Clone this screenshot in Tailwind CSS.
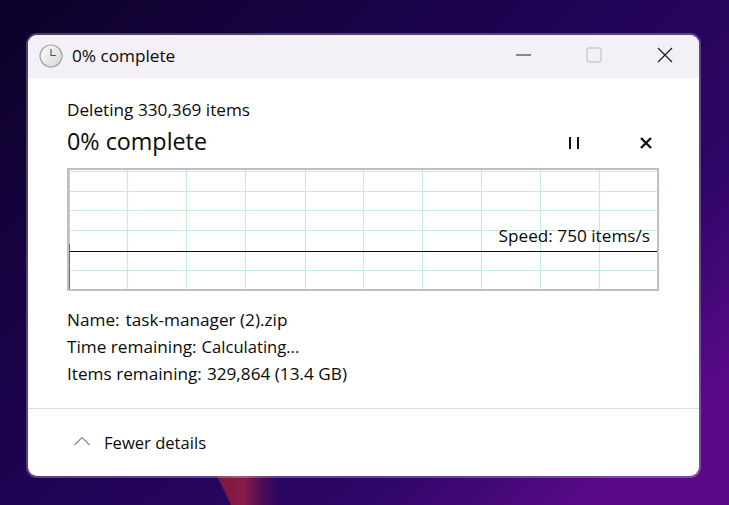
<!DOCTYPE html>
<html lang="en">
<head>
    <meta charset="UTF-8">
    <meta name="viewport" content="width=device-width, initial-scale=1.0">
    <title>0% complete</title>
    <script src="https://cdn.jsdelivr.net/npm/@tailwindcss/browser@4"></script>
</head>
<body class="relative w-[729px] h-[505px] overflow-hidden bg-[#16043f] font-['Open_Sans',sans-serif] text-[#0a0a0a]">

    <!-- wallpaper -->
    <svg class="absolute inset-0" width="729" height="505" viewBox="0 0 729 505">
        <defs>
            <linearGradient id="wall" x1="0" y1="0" x2="1" y2="0.75">
                <stop offset="0" stop-color="#0c0228"/>
                <stop offset="0.45" stop-color="#1c0350"/>
                <stop offset="0.8" stop-color="#2f0668"/>
                <stop offset="1" stop-color="#5a0a88"/>
            </linearGradient>
            <linearGradient id="wisp" x1="0" y1="0" x2="1" y2="0">
                <stop offset="0" stop-color="#7a1840"/>
                <stop offset="0.4" stop-color="#8a1c46"/>
                <stop offset="1" stop-color="#3a0a58" stop-opacity="0"/>
            </linearGradient>
        </defs>
        <rect width="729" height="505" fill="url(#wall)"/>
        <path d="M217 476 L275 476 L285 505 L231 505Z" fill="url(#wisp)"/>
    </svg>

    <div class="relative pt-[35px] pl-[28px]">
        <div class="w-[671px] h-[441px] flex flex-col rounded-[9px] bg-white outline-2 outline-white/25">

            <!-- title bar -->
            <div class="h-[43px] shrink-0 flex items-center rounded-t-[9px] bg-[#f3f0f7] pl-[11px]">
                <svg class="-mt-[2px]" width="24" height="24" viewBox="0 0 24 24">
                    <defs>
                        <linearGradient id="clock" x1="0" y1="0" x2="1" y2="1">
                            <stop offset="0" stop-color="#ffffff"/>
                            <stop offset="1" stop-color="#d4d4d4"/>
                        </linearGradient>
                    </defs>
                    <circle cx="12" cy="12" r="11" fill="url(#clock)" stroke="#a4a4a4" stroke-width="1.2"/>
                    <path d="M12 5V11.5H17" fill="none" stroke="#5a5a5a" stroke-width="1.2"/>
                </svg>
                <span class="ml-[9px] -mt-[2px] text-[17.2px]">0% complete</span>
                <div class="ml-auto flex items-center -mt-[3px]">
                    <svg class="mr-[54px]" width="16" height="16" viewBox="0 0 16 16"><path d="M0 8H15" stroke="#1a1a1a" stroke-width="1"/></svg>
                    <svg class="mr-[55px]" width="16" height="16" viewBox="0 0 16 16"><rect x="1" y="1" width="14" height="14" rx="2" fill="none" stroke="#cccccc" stroke-width="1.4"/></svg>
                    <svg class="mr-[26px]" width="16" height="16" viewBox="0 0 16 16"><path d="M1 1L15 15M15 1L1 15" stroke="#1a1a1a" stroke-width="1.2"/></svg>
                </div>
            </div>

            <!-- body -->
            <div class="flex-1 pl-[39px] pr-[40px] pt-[21px]">
                <div class="text-[17.2px] leading-[22px]">Deleting 330,369 items</div>
                <div class="mt-[5px] flex items-center h-[30px]">
                    <span class="text-[23.3px]">0% complete</span>
                    <div class="ml-auto flex items-center mt-[3px]">
                        <svg class="mr-[59px]" width="12" height="12" viewBox="0 0 12 12"><path d="M2 0V12M10 0V12" stroke="#111111" stroke-width="2"/></svg>
                        <svg class="mr-[6px]" width="14" height="14" viewBox="0 0 14 14"><path d="M2 2L12 12M12 2L2 12" stroke="#111111" stroke-width="2.4"/></svg>
                    </div>
                </div>

                <!-- speed chart -->
                <div class="relative mt-[12px] w-[592px] h-[123px] border-2 border-[#bfbfbf]">
                    <svg class="block" width="588" height="119" viewBox="0 0 588 119">
                        <g stroke="#c8eed2" stroke-width="1.2">
                            <path d="M0 1.5H588M0 21.5H588M0 40.5H588M0 60.5H588M0 100.5H588"/>
                            <path d="M58.5 0V119M117.5 0V119M176.5 0V119M236.5 0V119M294.5 0V119M353.5 0V119M412.5 0V119M471.5 0V119M530.5 0V119"/>
                        </g>
                        <path d="M0.5 0V74" stroke="#a6e5a8" stroke-width="1"/>
                        <path d="M0.5 74V119" stroke="#14a83c" stroke-width="1"/>
                        <path d="M1 81.5H588" stroke="#0a0a0a" stroke-width="1.2"/>
                    </svg>
                    <span class="absolute right-[7px] top-[55px] text-[17.2px] leading-[22px]">Speed: 750 items/s</span>
                </div>

                <div class="mt-[15px] text-[17.2px] leading-[27px]">
                    <div class="flex gap-[6px]"><span>Name:</span><span>task-manager (2).zip</span></div>
                    <div class="flex gap-[5px]"><span>Time remaining:</span><span class="text-[16.6px]">Calculating...</span></div>
                    <div class="flex gap-[5px]"><span>Items remaining:</span><span>329,864 (13.4 GB)</span></div>
                </div>
            </div>

            <!-- footer -->
            <div class="h-[68px] shrink-0 flex items-center border-t border-[#dedede] pl-[46px]">
                <svg class="-mt-[3px]" width="16" height="10" viewBox="0 0 16 10"><path d="M0.5 9L8 1.5L15.5 9" fill="none" stroke="#8a8a8a" stroke-width="1.2"/></svg>
                <span class="ml-[14px] mt-[1px] text-[16.6px]">Fewer details</span>
            </div>
        </div>
    </div>

</body>
</html>
